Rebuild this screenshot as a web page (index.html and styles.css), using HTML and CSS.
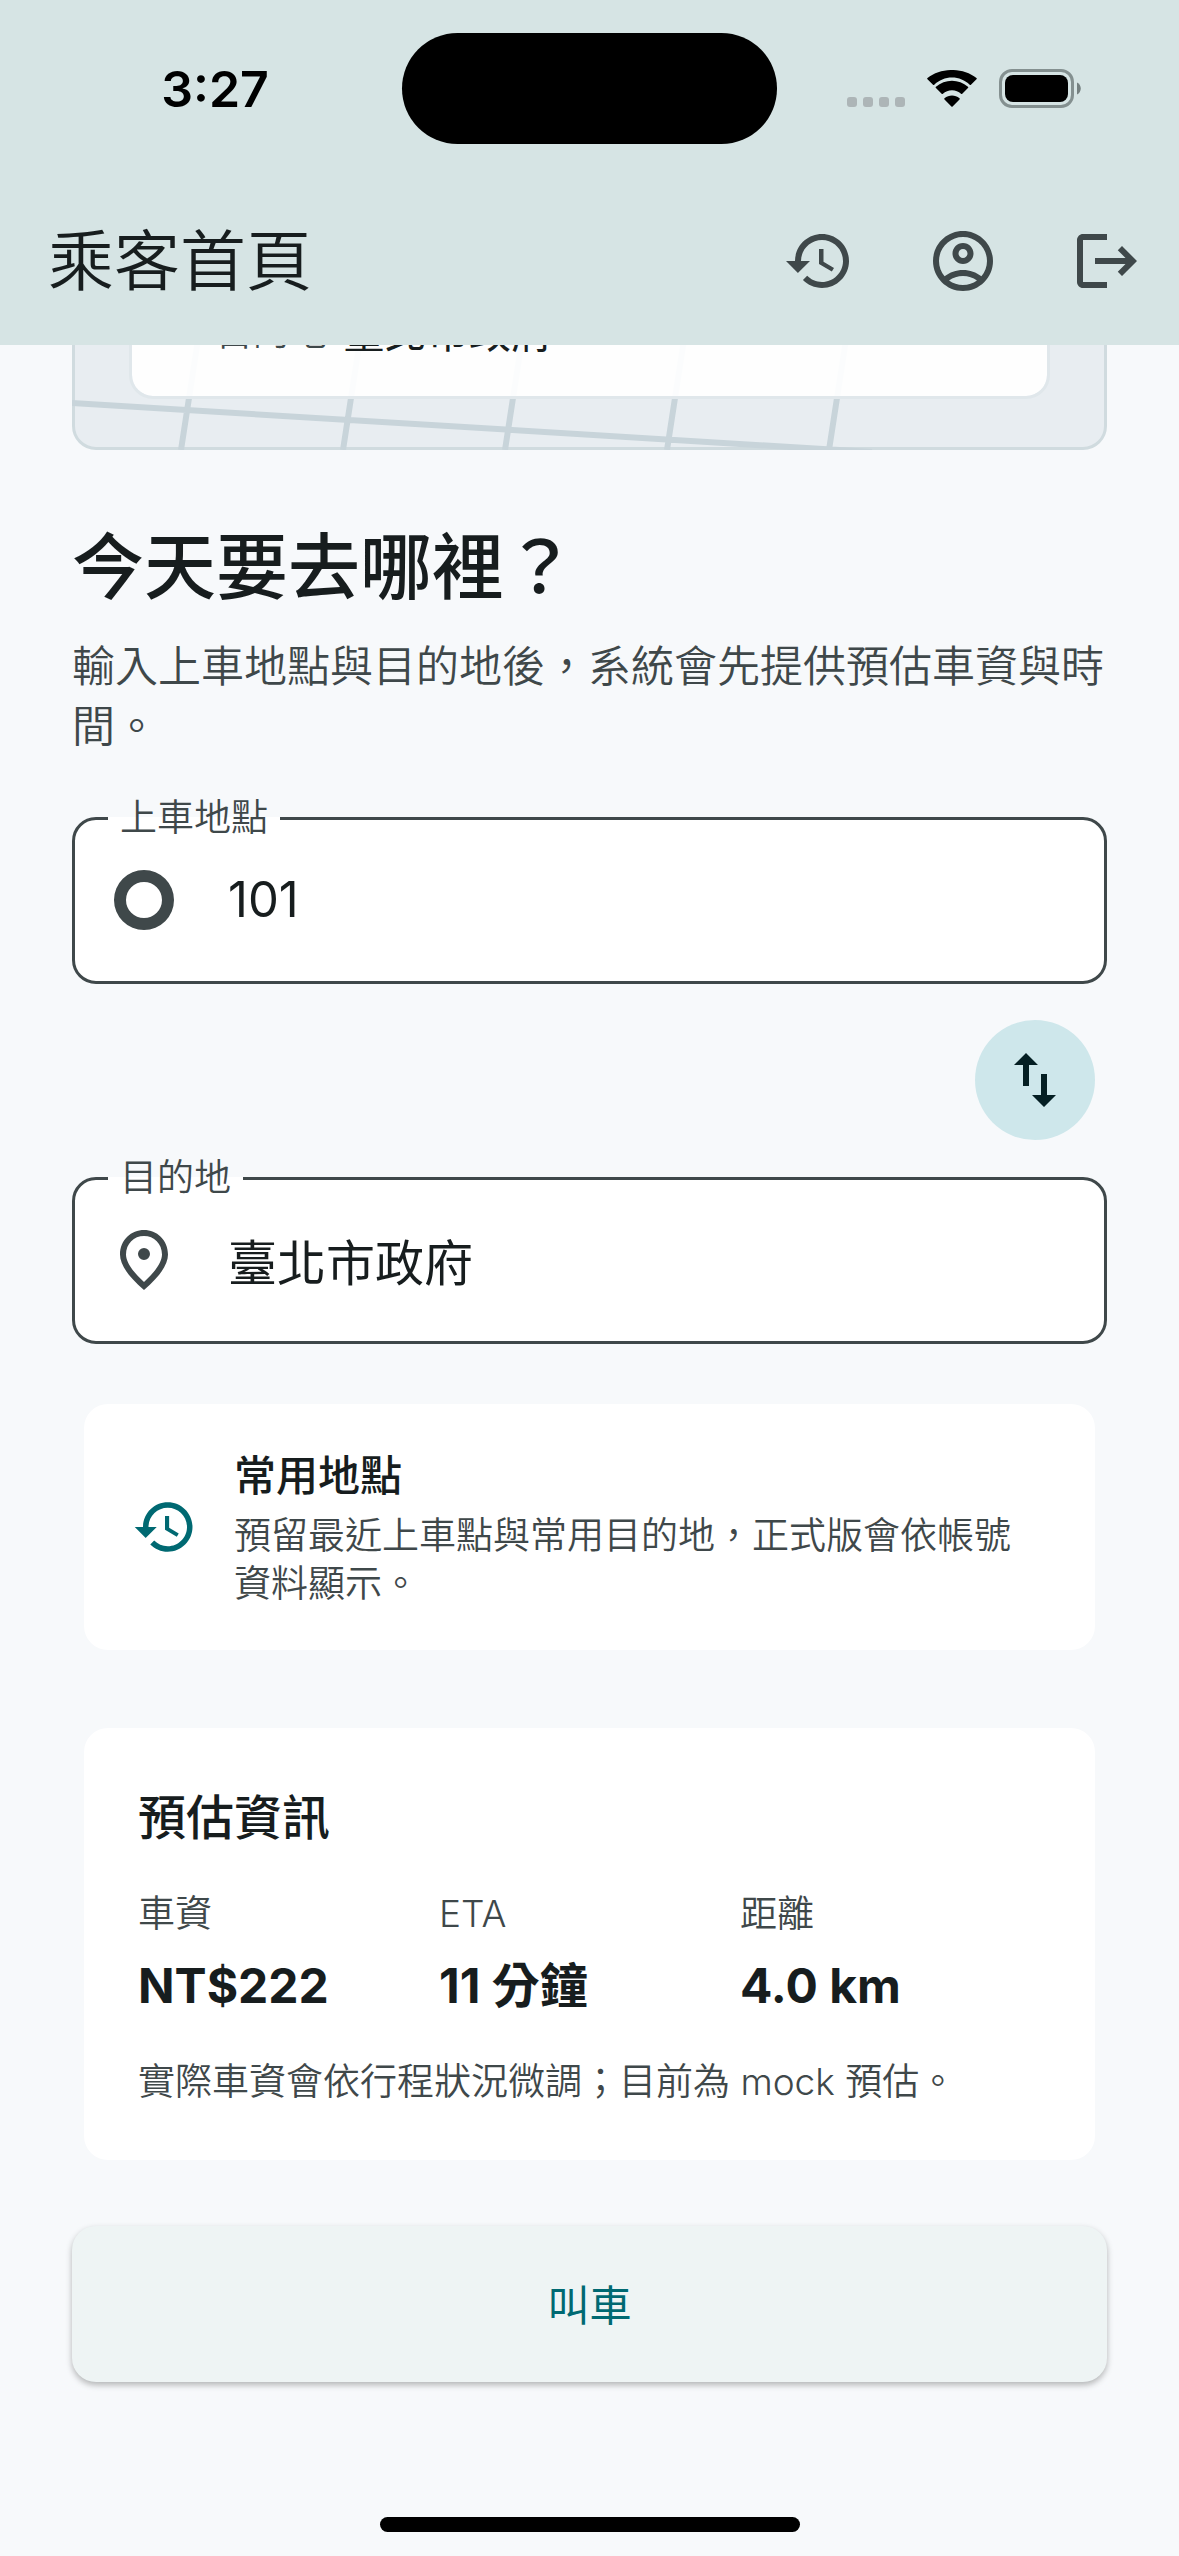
FILE: index.html
```html
<!DOCTYPE html>
<html lang="zh-Hant">
<head>
<meta charset="utf-8">
<meta name="viewport" content="width=device-width, initial-scale=1">
<title>乘客首頁</title>
<link rel="stylesheet" href="styles.css">
</head>
<body>
<header class="top">
  <div class="status">
    <time class="clock">3:27</time>
    <div class="island"></div>
    <div class="signals">
      <svg class="dots" viewBox="0 0 58 10" aria-hidden="true"><rect width="10" height="10" rx="3"/><rect x="16" width="10" height="10" rx="3"/><rect x="32" width="10" height="10" rx="3"/><rect x="48" width="10" height="10" rx="3"/></svg>
      <svg class="wifi" viewBox="0 0 50 37" aria-hidden="true"><path d="M25 7.6c6.800 0 13 2.600 17.700 7.200.35.35.9.35 1.250 0l5.500-5.500a.9.900 0 0 0 0-1.300C36-2.700 14-2.700.500 8a.9.900 0 0 0 0 1.300L6 14.800c.35.35.9.35 1.250 0C12 10.200 18.200 7.600 25 7.600zM25 20.200c3.500 0 6.600 1.300 9 3.500.35.35.9.35 1.250 0l5.700-5.600a.9.900 0 0 0 0-1.300c-9-8.200-23-8.200-32 0a.9.900 0 0 0 0 1.300l5.700 5.600c.35.35.9.35 1.250 0 2.500-2.200 5.600-3.500 9.100-3.500zM32.500 29.500c.4-.35.4-.9 0-1.300-4.400-3.700-10.600-3.700-15 0-.4.4-.4.950 0 1.300l6.900 6.900c.35.35.85.35 1.200 0z"/></svg>
      <svg class="battery" viewBox="0 0 82 39" aria-hidden="true"><rect class="shell" x="1.500" y="1.500" width="72" height="36" rx="11.500"/><rect x="6" y="6" width="63" height="27" rx="8"/><path class="nub" d="M78 13.500c5 2.200 5 9.800 0 12z"/></svg>
    </div>
  </div>
  <div class="appbar">
    <h1 class="appbar-title">乘客首頁</h1>
    <nav class="actions">
      <button class="icon-button" type="button" aria-label="歷史紀錄"><svg class="icon" viewBox="0 0 24 24"><path d="M13 3c-4.970 0-9 4.030-9 9H1l3.890 3.890.07.14L9 12H6c0-3.870 3.130-7 7-7s7 3.130 7 7-3.130 7-7 7c-1.930 0-3.680-.79-4.940-2.060l-1.420 1.420C8.270 19.990 10.510 21 13 21c4.970 0 9-4.030 9-9s-4.030-9-9-9zm-1 5v5l4.280 2.540.72-1.210-3.500-2.080V8H12z"/></svg></button>
      <button class="icon-button" type="button" aria-label="帳號"><svg class="icon" viewBox="0 0 24 24"><path d="M12 2C6.480 2 2 6.480 2 12s4.480 10 10 10 10-4.480 10-10S17.520 2 12 2zM7.350 18.500C8.660 17.560 10.260 17 12 17s3.340.56 4.650 1.500C15.340 19.440 13.740 20 12 20s-3.340-.56-4.650-1.500zm10.790-1.380C16.450 15.800 14.320 15 12 15s-4.450.8-6.140 2.120C4.700 15.730 4 13.950 4 12c0-4.420 3.580-8 8-8s8 3.580 8 8c0 1.950-.7 3.730-1.860 5.120z"/><path d="M12 6c-1.930 0-3.500 1.570-3.500 3.500S10.070 13 12 13s3.500-1.570 3.500-3.500S13.930 6 12 6zm0 5c-.83 0-1.500-.67-1.500-1.500S11.170 8 12 8s1.500.67 1.500 1.500S12.830 11 12 11z"/></svg></button>
      <button class="icon-button" type="button" aria-label="登出"><svg class="icon" viewBox="0 0 24 24"><path d="M17 7l-1.410 1.410L18.170 11H8v2h10.170l-2.580 2.580L17 17l5-5zM4 5h8V3H4c-1.100 0-2 .9-2 2v14c0 1.100.9 2 2 2h8v-2H4V5z"/></svg></button>
    </nav>
  </div>
</header>

<main class="page">
  <section class="map-view" aria-label="路線地圖">
    <div class="map">
      <svg class="roads" viewBox="0 0 1035 360" preserveAspectRatio="xMinYMax slice" aria-hidden="true">
        <path d="M0 313L800 362M109 360L158 42M271 360L320 42M433 360L482 42M595 360L644 42M757 360L806 42"/>
      </svg>
      <div class="route">
        <span class="route-label">目的地</span>
        <span class="route-value">臺北市政府</span>
      </div>
    </div>
  </section>

  <h2 class="headline">今天要去哪裡？</h2>
  <p class="intro">輸入上車地點與目的地後，系統會先提供預估車資與時間。</p>

  <form class="trip">
    <fieldset class="field">
      <legend class="field-legend"><label for="pickup">上車地點</label></legend>
      <div class="field-row">
        <svg class="icon" viewBox="0 0 24 24" aria-hidden="true"><path d="M12 2a10 10 0 1 0 0 20 10 10 0 0 0 0-20zm0 16a6 6 0 1 1 0-12 6 6 0 0 1 0 12z"/></svg>
        <input class="field-input" id="pickup" type="text" value="101">
      </div>
    </fieldset>
    <button class="swap" type="button" aria-label="交換地點"><svg class="icon" viewBox="0 0 24 24"><path d="M16 17.010V10h-2v7.010h-3L15 21l4-3.990h-3zM9 3L5 6.990h3V14h2V6.990h3L9 3z"/></svg></button>
    <fieldset class="field">
      <legend class="field-legend"><label for="destination">目的地</label></legend>
      <div class="field-row">
        <svg class="icon" viewBox="0 0 24 24" aria-hidden="true"><path fill-rule="evenodd" d="M12 2c4.200 0 8 3.220 8 8.200 0 3.320-2.670 7.250-8 11.800-5.330-4.550-8-8.480-8-11.800C4 5.220 7.800 2 12 2zm6 8.200C18 6.570 15.350 4 12 4s-6 2.570-6 6.200c0 2.340 1.950 5.440 6 9.140 4.050-3.700 6-6.800 6-9.140zM12 8a2 2 0 1 1 0 4 2 2 0 0 1 0-4z"/></svg>
        <input class="field-input" id="destination" type="text" value="臺北市政府">
      </div>
    </fieldset>
  </form>

  <section class="card places">
    <svg class="icon places-icon" viewBox="0 0 24 24" aria-hidden="true"><path d="M13 3c-4.970 0-9 4.030-9 9H1l3.890 3.890.07.14L9 12H6c0-3.870 3.130-7 7-7s7 3.130 7 7-3.130 7-7 7c-1.930 0-3.680-.79-4.940-2.060l-1.420 1.420C8.270 19.990 10.510 21 13 21c4.970 0 9-4.030 9-9s-4.030-9-9-9zm-1 5v5l4.280 2.540.72-1.210-3.500-2.080V8H12z"/></svg>
    <div class="places-text">
      <h3 class="places-title">常用地點</h3>
      <p class="small">預留最近上車點與常用目的地，正式版會依帳號資料顯示。</p>
    </div>
  </section>

  <section class="card estimate">
    <h3 class="estimate-title">預估資訊</h3>
    <dl class="stats">
      <div class="stat"><dt class="small">車資</dt><dd class="stat-value">NT$222</dd></div>
      <div class="stat"><dt class="small">ETA</dt><dd class="stat-value">11 分鐘</dd></div>
      <div class="stat"><dt class="small">距離</dt><dd class="stat-value">4.0 km</dd></div>
    </dl>
    <p class="small">實際車資會依行程狀況微調；目前為 mock 預估。</p>
  </section>

  <button class="call" type="button">叫車</button>
</main>

<footer class="home"><div class="home-bar"></div></footer>
</body>
</html>
```
FILE: styles.css
```css
:root {
  --ink: #171d1e;
  --muted: #3f484a;
  --teal: #006972;
  --bar: #d6e4e4;
  --bg: #f7f9fb;
}

* {
  box-sizing: border-box;
}

body {
  margin: 0;
  min-height: 100vh;
  display: flex;
  flex-direction: column;
  background: var(--bg);
  color: var(--ink);
  font-family: Inter, "Noto Sans CJK TC", sans-serif;
}

h1, h2, h3, p, dl, dd {
  margin: 0;
}

button {
  border: 0;
  padding: 0;
  font: inherit;
  cursor: pointer;
}

.icon {
  display: block;
  flex: none;
  width: 72px;
  height: 72px;
  fill: currentColor;
}

/* Status bar and app bar */

.top {
  background: var(--bar);
}

.status {
  display: grid;
  grid-template-columns: 1fr 375px 1fr;
  align-items: center;
  height: 177px;
  color: #000;
}

.clock {
  padding-left: 28px;
  text-align: center;
  font-size: 50px;
  font-weight: 600;
}

.island {
  height: 111px;
  border-radius: 56px;
  background: #000;
}

.signals {
  display: flex;
  justify-content: center;
  align-items: flex-end;
  gap: 22px;
  padding-right: 28px;
}

.dots {
  width: 58px;
  height: 10px;
  margin-bottom: 1px;
  fill: #adb5b7;
  flex: none;
}

.wifi {
  width: 50px;
  height: 37px;
  margin-bottom: 1px;
  flex: none;
}

.battery {
  width: 82px;
  height: 39px;
  flex: none;
}

.shell {
  fill: none;
  stroke: #849090;
  stroke-width: 3;
}

.nub {
  fill: #758080;
}

.appbar {
  display: flex;
  align-items: center;
  justify-content: space-between;
  height: 168px;
  padding-left: 48px;
}

.appbar-title {
  font-size: 66px;
  font-weight: 350;
  line-height: 84px;
}

.actions {
  display: flex;
}

.icon-button {
  display: flex;
  align-items: center;
  justify-content: center;
  width: 144px;
  height: 144px;
  background: none;
  color: var(--muted);
}

/* Page */

.page {
  flex: 1;
  display: flex;
  flex-direction: column;
  padding: 0 72px;
}

.map-view {
  display: flex;
  align-items: flex-end;
  height: 105px;
  overflow: hidden;
}

.map {
  position: relative;
  flex: 1;
  display: flex;
  flex-direction: column;
  justify-content: flex-end;
  height: 360px;
  flex-shrink: 0;
  padding: 48px 54px;
  border: 3px solid #d0dbdf;
  border-radius: 24px;
  background: #e8edf1;
}

.roads {
  position: absolute;
  inset: -3px;
  width: calc(100% + 6px);
  height: calc(100% + 6px);
  border-radius: 24px;
  fill: none;
  stroke: #c8d4da;
  stroke-width: 6;
}

.route {
  position: relative;
  display: flex;
  align-items: center;
  gap: 16px;
  padding: 36px 84px;
  border: 3px solid #e0e7eb;
  border-radius: 24px;
  background: rgba(255, 255, 255, 0.93);
  background-clip: padding-box;
  line-height: 54px;
}

.route-label {
  font-size: 37px;
  font-weight: 350;
  color: var(--muted);
}

.route-value {
  font-size: 42px;
}

.headline {
  margin-top: 72px;
  font-size: 72px;
  font-weight: 500;
  line-height: 90px;
}

.intro {
  margin-top: 24px;
  font-size: 43px;
  font-weight: 350;
  line-height: 60px;
  color: var(--muted);
}

/* Trip form */

.trip {
  display: flex;
  flex-direction: column;
  margin-top: 36px;
}

.field {
  min-width: 0;
  margin: 0;
  padding: 0 33px 25px;
  border: 3px solid var(--muted);
  border-radius: 24px;
  background: #fff;
  color: var(--muted);
}

.field-legend {
  padding: 2px 12px;
  font-size: 37px;
  font-weight: 350;
  line-height: 48px;
}

.field-row {
  display: flex;
  align-items: center;
  gap: 48px;
  height: 112px;
}

.field-input {
  flex: 1;
  min-width: 0;
  height: 72px;
  padding: 0 0 2px;
  border: 0;
  outline: 0;
  background: none;
  color: var(--ink);
  font: inherit;
  font-size: 49px;
  font-weight: 400;
}

.swap {
  display: flex;
  align-self: flex-end;
  align-items: center;
  justify-content: center;
  width: 120px;
  height: 120px;
  margin: 36px 12px 12px;
  border-radius: 50%;
  background: #cee7eb;
  color: #041f23;
}

/* Cards */

.card {
  margin: 0 12px;
  border-radius: 24px;
  background: #fff;
}

.small {
  font-size: 37px;
  font-weight: 350;
  line-height: 48px;
  color: var(--muted);
}

.places {
  display: flex;
  align-items: center;
  gap: 36px;
  margin-top: 60px;
  padding: 42px 72px 42px 48px;
}

.places-icon {
  width: 66px;
  height: 66px;
  color: var(--teal);
}

.places-text {
  display: flex;
  flex-direction: column;
  gap: 6px;
}

.places-title {
  font-size: 42px;
  font-weight: 500;
  line-height: 60px;
}

.estimate {
  display: flex;
  flex-direction: column;
  gap: 36px;
  margin-top: 78px;
  padding: 54px;
}

.estimate-title {
  font-size: 48px;
  font-weight: 500;
  line-height: 72px;
}

.stats {
  display: grid;
  grid-template-columns: repeat(3, 1fr);
}

.stat {
  display: flex;
  flex-direction: column;
  gap: 12px;
}

.stat-value {
  font-size: 48px;
  font-weight: 700;
  line-height: 72px;
}

.call {
  height: 156px;
  margin-top: 66px;
  padding-bottom: 4px;
  border-radius: 24px;
  background: #eef4f4;
  box-shadow: 0 3px 6px rgba(0, 0, 0, 0.28);
  color: var(--teal);
  font-size: 42px;
}

.home {
  display: flex;
  justify-content: center;
  padding: 24px;
}

.home-bar {
  width: 420px;
  height: 15px;
  border-radius: 8px;
  background: #000;
}
```
